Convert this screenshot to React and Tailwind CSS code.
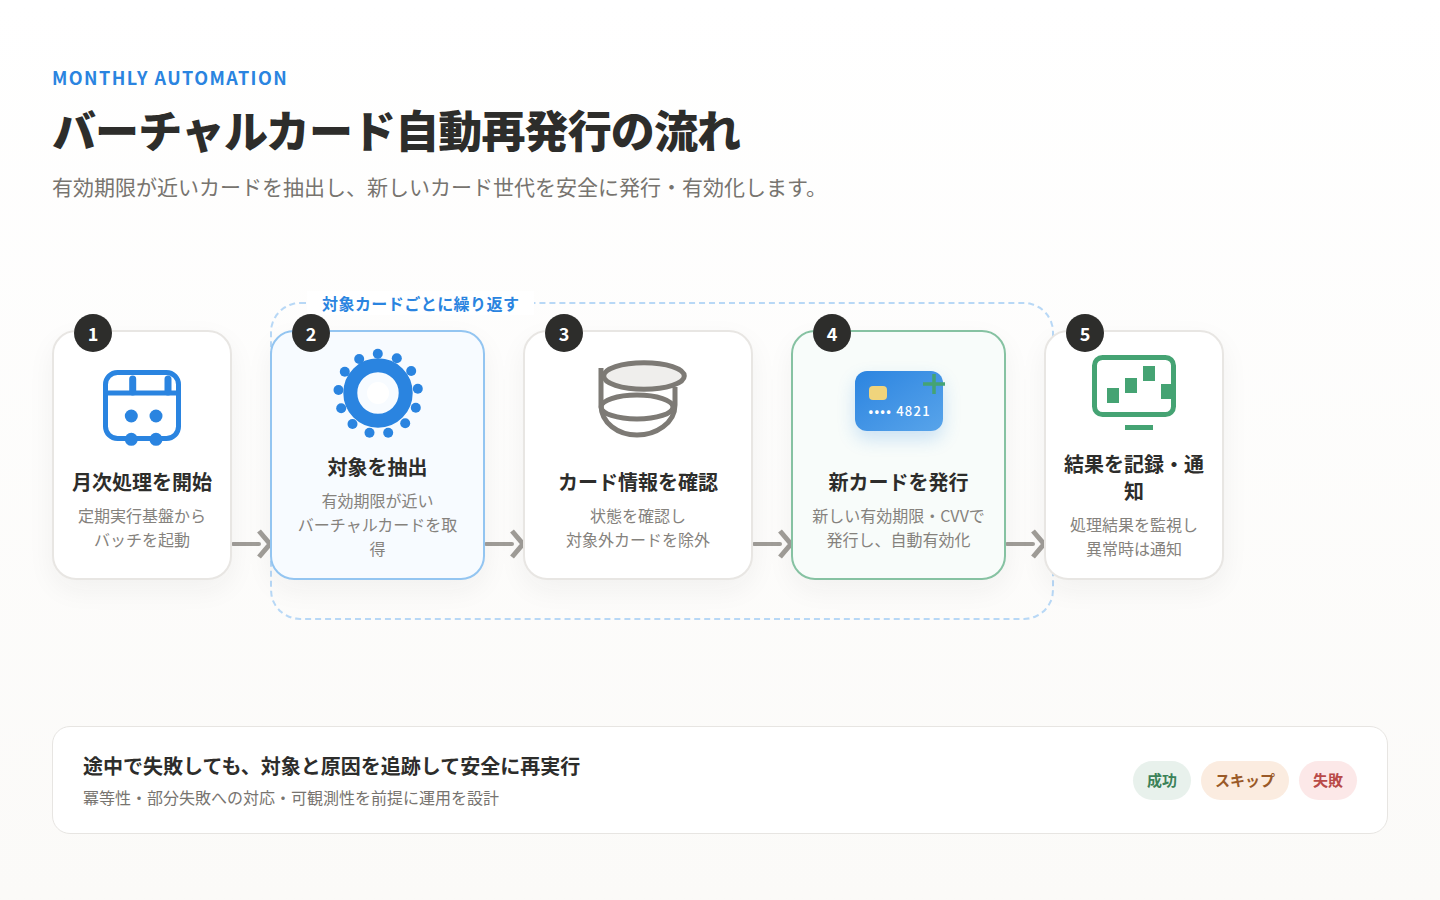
import React from 'react';

const CalendarIcon = () => (
  <svg viewBox="0 0 96 96" className="w-24 h-24 overflow-visible">
    <rect x="11.5" y="19.5" width="73" height="66" rx="12" fill="none" stroke="#2a84e0" strokeWidth="5" />
    <path d="M11.5 40H84.5" stroke="#2a84e0" strokeWidth="5" />
    <path d="M38.7 26V39M74 26V39" stroke="#2a84e0" strokeWidth="7" strokeLinecap="round" />
    <circle cx="37.3" cy="63" r="6.5" fill="#2a84e0" />
    <circle cx="62" cy="63" r="6.5" fill="#2a84e0" />
    <circle cx="37.3" cy="86.3" r="6.5" fill="#2a84e0" />
    <circle cx="62" cy="86.3" r="6.5" fill="#2a84e0" />
  </svg>
);

const gearDots = [
  [47.8, 15.7], [66.8, 20.3], [81.2, 33], [87.8, 50.7], [85.8, 69.7], [75.2, 85.3], [58.2, 94.7],
  [39.5, 94.7], [22.5, 86], [11.2, 70.3], [8.5, 52], [14.8, 33.7], [29.2, 21],
];

const GearIcon = () => (
  <svg viewBox="0 0 96 96" className="w-24 h-24 overflow-visible">
    <circle cx="48" cy="55" r="27.7" fill="none" stroke="#2a84e0" strokeWidth="14" />
    <circle cx="48" cy="55" r="11" fill="#ffffff" />
    {gearDots.map(([x, y]) => (
      <circle key={x} cx={x} cy={y} r="5" fill="#2a84e0" />
    ))}
  </svg>
);

const DatabaseIcon = () => (
  <svg viewBox="0 0 96 96" className="w-24 h-24 overflow-visible">
    <path d="M11 15V52C11 70 28 82 47 82C66 82 85 70 85 52V34" fill="none" stroke="#7d7a75" strokeWidth="5" />
    <ellipse cx="47" cy="54" rx="36" ry="12" fill="none" stroke="#7d7a75" strokeWidth="5" />
    <ellipse cx="54" cy="23" rx="40.3" ry="13.3" fill="#efeeec" stroke="#7d7a75" strokeWidth="5" />
  </svg>
);

const NewCardIcon = () => (
  <div className="relative w-[88px] h-[60px] rounded-xl bg-gradient-to-br from-[#2a84e0] to-[#58a4ea] shadow-[0_8px_18px_rgba(42,132,224,0.22)]">
    <div className="absolute left-[14px] top-[15px] w-[18px] h-[14px] rounded bg-[#f0d47c]"></div>
    <div className="absolute left-[14px] top-[30px] text-[13px] leading-[19px] font-medium tracking-[1.25px] text-white whitespace-nowrap">
      •••• 4821
    </div>
    <svg viewBox="0 0 22 20" className="absolute left-[68px] top-[3px] w-[22px] h-5">
      <path d="M0 10H22M11 0V20" stroke="#45a373" strokeWidth="3.5" />
    </svg>
  </div>
);

const MonitorIcon = () => (
  <svg viewBox="0 0 96 96" className="w-24 h-24 overflow-visible">
    <rect x="8.5" y="22.5" width="79" height="57" rx="8" fill="none" stroke="#45a373" strokeWidth="5" />
    <path d="M21 53h12v15H21zM39 43h12v15H39zM57 31h12v15H57zM75 49h12v15H75zM39 90h28v5H39z" fill="#45a373" />
  </svg>
);

const Arrow = () => (
  <div className="w-[38px] shrink-0 flex items-end pb-[22px]">
    <svg viewBox="0 0 40 28" className="w-10 h-7 shrink-0 overflow-visible">
      <path d="M1 14H27" stroke="#a09d98" strokeWidth="4" strokeLinecap="round" />
      <path d="M27 1L38 14L27 27" fill="none" stroke="#a09d98" strokeWidth="5" />
    </svg>
  </div>
);

const Card = ({ num, title, desc, icon, className }) => (
  <div className={`relative z-10 h-[250px] rounded-3xl border-2 shadow-[0_10px_28px_rgba(45,45,43,0.05)] flex flex-col justify-end items-center px-[18px] text-center ${className}`}>
    <div className="absolute -top-[18px] left-5 w-[38px] h-[38px] rounded-full bg-[#2d2d2b] text-white text-lg font-bold flex items-center justify-center">
      {num}
    </div>
    <div className="h-24 w-24 flex items-center justify-center mb-[19px]">{icon}</div>
    <h3 className="text-xl leading-[27px] font-bold text-[#2d2d2b] mb-2">{title}</h3>
    <p className="text-base leading-6 text-[#85827d]">{desc}</p>
  </div>
);

export default function App() {
  return (
    <div className="min-h-[900px] bg-gradient-to-b from-white to-[#fbfaf8] px-[52px] pt-[65px] font-['Noto_Sans_CJK_JP','Noto_Sans',sans-serif]">
      <div className="text-lg leading-6 font-semibold tracking-[1.45px] text-[#2a84e0]">MONTHLY AUTOMATION</div>
      <h1 className="mt-[11px] text-[44px] leading-[58px] tracking-[-0.88px] font-black text-[#2d2d2b]">バーチャルカード自動再発行の流れ</h1>
      <p className="mt-[14px] text-[21px] leading-7 text-[#77746f]">
        有効期限が近いカードを抽出し、新しいカード世代を安全に発行・有効化します。
      </p>

      <div className="relative mt-[130px] flex items-stretch">
        {/* loop frame behind cards 2-4 */}
        <div className="absolute left-[218px] -top-[28px] w-[784px] h-[318px] rounded-[30px] border-2 border-dashed border-[#b8d8f6]">
          <span className="absolute left-[35px] -top-[13px] px-[15px] bg-white text-base leading-6 tracking-[0.45px] font-bold text-[#2a84e0] whitespace-nowrap">
            対象カードごとに繰り返す
          </span>
        </div>

        <Card
          num="1"
          title="月次処理を開始"
          desc={<>定期実行基盤から<br />バッチを起動</>}
          icon={<CalendarIcon />}
          className="w-[180px] bg-white border-[#e8e6e3] pb-[27px]"
        />
        <Arrow />
        <Card
          num="2"
          title="対象を抽出"
          desc={<>有効期限が近い<br />バーチャルカードを取得</>}
          icon={<GearIcon />}
          className="w-[215px] bg-[#f7fbff] border-[#93c5f1] pb-[18px]"
        />
        <Arrow />
        <Card
          num="3"
          title="カード情報を確認"
          desc={<>状態を確認し<br />対象外カードを除外</>}
          icon={<DatabaseIcon />}
          className="w-[230px] bg-white border-[#e8e6e3] pb-[27px]"
        />
        <Arrow />
        <Card
          num="4"
          title="新カードを発行"
          desc={<>新しい有効期限・CVVで<br />発行し、自動有効化</>}
          icon={<NewCardIcon />}
          className="w-[215px] bg-[#f8fcfa] border-[#86c2a2] pb-[27px]"
        />
        <Arrow />
        <Card
          num="5"
          title="結果を記録・通知"
          desc={<>処理結果を監視し<br />異常時は通知</>}
          icon={<MonitorIcon />}
          className="w-[180px] bg-white border-[#e8e6e3] pb-[18px]"
        />
      </div>

      <div className="mt-[146px] h-[108px] rounded-[18px] border border-[#e7e5e2] bg-white px-[30px] flex items-center justify-between">
        <div>
          <div className="text-xl leading-7 font-bold text-[#2d2d2b]">途中で失敗しても、対象と原因を追跡して安全に再実行</div>
          <div className="mt-[5px] text-base leading-6 text-[#77746f]">冪等性・部分失敗への対応・可観測性を前提に運用を設計</div>
        </div>
        <div className="flex gap-[10px]">
          <span className="h-[39px] px-[14px] pt-px rounded-full bg-[#e8f1ec] text-[#3c8259] text-[15px] font-semibold flex items-center">成功</span>
          <span className="h-[39px] px-[14px] pt-px rounded-full bg-[#fbece0] text-[#9a5a28] text-[15px] font-semibold flex items-center">スキップ</span>
          <span className="h-[39px] px-[14px] pt-px rounded-full bg-[#fce8e8] text-[#b94a48] text-[15px] font-semibold flex items-center">失敗</span>
        </div>
      </div>
    </div>
  );
}
